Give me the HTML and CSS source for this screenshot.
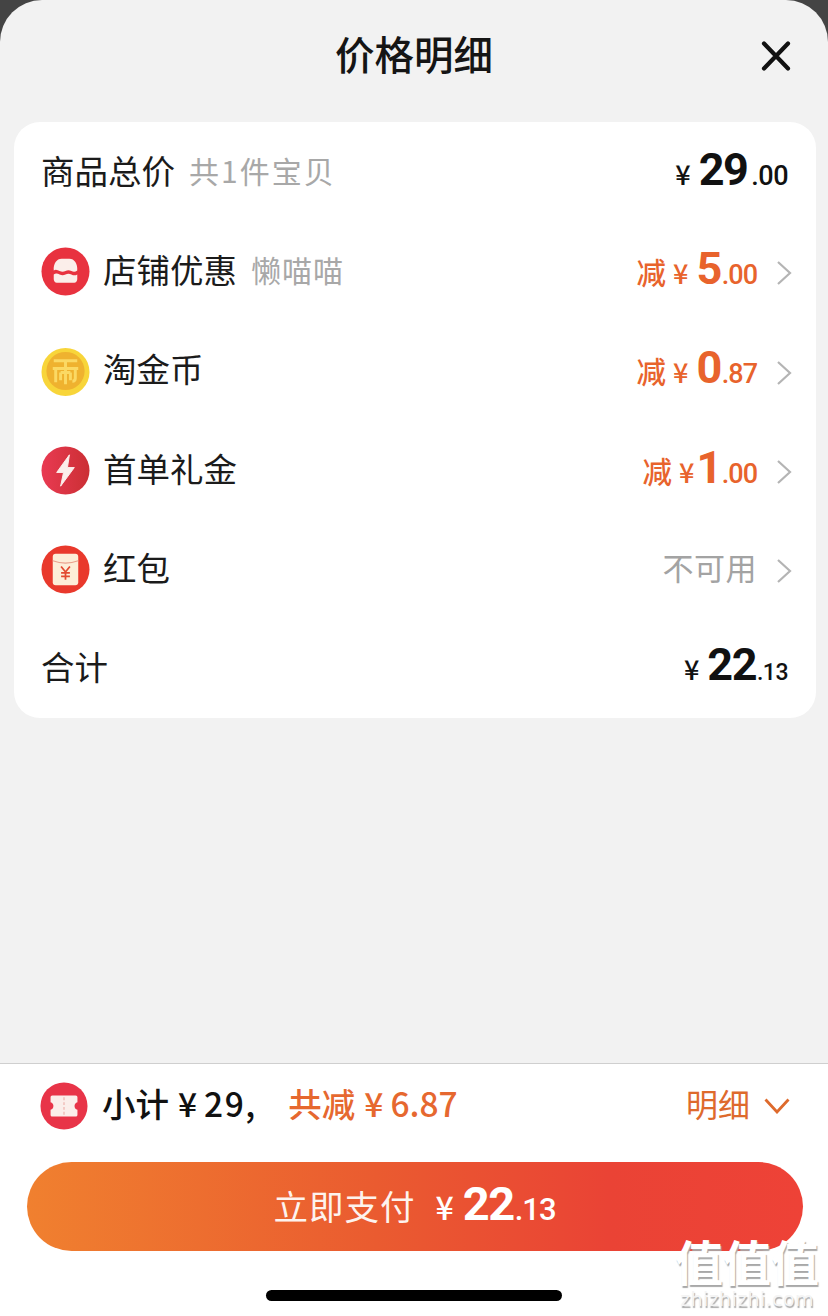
FILE: index.html
```html
<!DOCTYPE html>
<html lang="zh">
<head>
<meta charset="utf-8">
<title>价格明细</title>
<link rel="stylesheet" href="styles.css">
</head>
<body>
<main class="sheet">
  <header class="head">
    <h1 class="title">价格明细</h1>
    <svg class="close" width="30" height="30" viewBox="0 0 30 30"><path d="M3 2.5 27 27.500M27 2.500 3 27.500" fill="none" stroke="#111" stroke-width="4.200" stroke-linecap="round"/></svg>
  </header>
  <section class="card">
    <div class="row">
      <span class="label">商品总价</span><span class="note wide">共1件宝贝</span>
      <span class="price"><span class="yen">¥</span><span class="big">29</span><span class="dec">.00</span></span>
    </div>
    <div class="row">
      <svg class="ico" width="49" height="49" viewBox="0 0 50 50"><circle cx="25" cy="25" r="24.500" fill="#e8323f"/><path d="M13 24c-.5-7 3-12 8-12h8c5 0 8.500 5 8 12-2 1.500-4 1.500-6 .5-2-1-4-1-6 0s-4 1-6 0-4-2-6-.5z" fill="#fbeeea"/><path d="M13 28c2-1.500 4-1 6 0s4 1 6 0 4-1 6 0 4 1.500 6 0v5c0 2-1.500 3.500-3 3.500H16c-1.500 0-3-1.500-3-3.500z" fill="#fbeeea"/></svg>
      <span class="label">店铺优惠</span><span class="note shop">懒喵喵</span>
      <span class="price off"><span class="cut">减</span><span class="yen">¥</span><span class="big">5</span><span class="dec tight">.00</span></span>
      <svg class="chev" width="16" height="26" viewBox="0 0 16 26"><path d="M2 2l12 11L2 24" fill="none" stroke="#b4b4b4" stroke-width="2.200"/></svg>
    </div>
    <div class="row">
      <svg class="ico" width="49" height="49" viewBox="0 0 50 50"><circle cx="25" cy="25.500" r="24.500" fill="#f8d53a"/><circle cx="25" cy="24.500" r="19.500" fill="#efb22f"/><path d="M13 14h24M12 22h26M15 22v14M35 22v10c0 2-1 3-3 3M25 14v24M20 26v8M30 26v8M20 26h10" fill="none" stroke="#fbd964" stroke-width="3"/></svg>
      <span class="label">淘金币</span>
      <span class="price off"><span class="cut">减</span><span class="yen">¥</span><span class="big">0</span><span class="dec tight">.87</span></span>
      <svg class="chev" width="16" height="26" viewBox="0 0 16 26"><path d="M2 2l12 11L2 24" fill="none" stroke="#b4b4b4" stroke-width="2.200"/></svg>
    </div>
    <div class="row">
      <svg class="ico" width="49" height="49" viewBox="0 0 50 50"><defs><linearGradient id="bolt" x1="0" x2="1" y1="0" y2="0"><stop offset="0" stop-color="#e93a52"/><stop offset="1" stop-color="#cb2f34"/></linearGradient></defs><circle cx="25" cy="25" r="24.500" fill="url(#bolt)"/><path d="M29 9 16 27h7l-3 14 14-19h-7z" fill="#fbeeea" stroke="#fbeeea" stroke-linejoin="round"/></svg>
      <span class="label">首单礼金</span>
      <span class="price off"><span class="cut">减</span><span class="yen">¥</span><span class="big one">1</span><span class="dec tight">.00</span></span>
      <svg class="chev" width="16" height="26" viewBox="0 0 16 26"><path d="M2 2l12 11L2 24" fill="none" stroke="#b4b4b4" stroke-width="2.200"/></svg>
    </div>
    <div class="row">
      <svg class="ico" width="49" height="49" viewBox="0 0 50 50"><circle cx="25" cy="25" r="24.500" fill="#e9392c"/><rect x="12" y="9" width="26" height="32" rx="3" fill="#fdeed8"/><path d="M12 16c8 3 18 3 26 0" fill="none" stroke="#e9a08c" stroke-width="1.200"/><path d="M20.500 22l4.500 5.500 4.500-5.500M25 27.500v8M20.500 28.500h9M20.500 32h9" fill="none" stroke="#e24a30" stroke-width="1.800"/></svg>
      <span class="label">红包</span>
      <span class="price na">不可用</span>
      <svg class="chev" width="16" height="26" viewBox="0 0 16 26"><path d="M2 2l12 11L2 24" fill="none" stroke="#b4b4b4" stroke-width="2.200"/></svg>
    </div>
    <div class="row">
      <span class="label">合计</span>
      <span class="price"><span class="yen">¥</span><span class="big">22</span><span class="dec small">.13</span></span>
    </div>
  </section>
  <div class="fill"></div>
  <footer class="foot">
    <div class="sum">
      <svg class="ico" width="48" height="48" viewBox="0 0 50 50"><circle cx="25" cy="25" r="24.500" fill="#e83448"/><path d="M13 14h24c1.500 0 2 1 2 2v5c-4 1-4 7 0 8v5c0 1-.5 2-2 2H13c-1.500 0-2-1-2-2v-5c4-1 4-7 0-8v-5c0-1 .5-2 2-2z" fill="#fbeeea"/><path d="M25 16v18" stroke="#f3c9c4" stroke-width="2" stroke-dasharray="3 2"/></svg>
      <span class="total">小计<span class="sy">¥</span><span class="num">29</span>,</span>
      <span class="save">共减<span class="sy">¥</span>6.87</span>
      <span class="more">明细</span>
      <svg class="down" width="26" height="16" viewBox="0 0 26 16"><path d="M1.500 1.500 13 14 24.500 1.500" fill="none" stroke="#de6a2c" stroke-width="2.800"/></svg>
    </div>
    <button class="pay" type="button"><span class="pay-label">立即支付</span><span class="yen pay-yen">¥</span><span class="big">22</span><span class="dec pay-dec">.13</span></button>
    <div class="home"></div>
  </footer>
</main>
<div class="mark"><div class="mark-big">值值值</div><div class="mark-url">zhizhizhi.com</div></div>
</body>
</html>
```

FILE: styles.css
```css
* { box-sizing: border-box; }
html, body { margin: 0; height: 1316px; overflow: hidden; }
body {
  position: relative;
  background: #444;
  font-family: "Noto Sans CJK SC", "Noto Sans", sans-serif;
  color: #111;
}
.sheet {
  height: 1316px;
  display: flex;
  flex-direction: column;
  background: #f2f2f2;
  border-radius: 42px 42px 0 0;
  overflow: hidden;
}
.head {
  height: 122px;
  flex: none;
  display: flex;
  align-items: center;
  justify-content: center;
  position: relative;
  padding-bottom: 17px;
}
.title { margin: 0; font-size: 39.500px; line-height: 54px; font-weight: 500; color: #151515; }
.close { position: absolute; left: 761px; top: 41px; }
.card {
  flex: none;
  height: 596px;
  margin: 0 12px 0 14px;
  padding: 0 24px 0 27px;
  background: #fff;
  border-radius: 26px;
  display: grid;
  grid-template-rows: repeat(6, 1fr);
}
.row { display: flex; align-items: center; min-width: 0; }
.ico { flex: none; margin: 2px 13px 0 0; }
.label { font-size: 33.500px; line-height: 44px; padding-bottom: 4px; color: #1b1b1b; }
.note { font-size: 30px; line-height: 44px; padding-bottom: 4px; color: #a8a8a8; margin-left: 14px; }
.wide { letter-spacing: 2px; }
.shop { letter-spacing: 1px; }
.price {
  margin: 2px 4px 0 auto;
  display: flex;
  align-items: baseline;
  font-family: Roboto, "Noto Sans CJK SC", sans-serif;
  color: #111;
  line-height: 44px;
}
.yen { font-size: 27px; font-weight: 500; margin-right: 8px; font-family: "Noto Sans CJK SC", sans-serif; }
.big { font-size: 45px; font-weight: 700; letter-spacing: -1.500px; font-family: "Roboto", sans-serif; }
.one { margin-left: -6px; }
.dec { font-size: 27px; font-weight: 500; margin-left: 4px; letter-spacing: -0.5px; font-family: "Roboto", sans-serif; }
.tight { margin-left: 1px; letter-spacing: -1px; }
.small { font-size: 23px; margin-left: 1px; }
.off { color: #e8632c; margin-right: 19px; }
.cut { font-size: 29.500px; font-weight: 500; margin-right: 7px; font-family: "Noto Sans CJK SC", sans-serif; }
.na { color: #a3a3a3; font-size: 31px; margin: 0 19px 0 auto; padding-bottom: 3px; font-family: "Noto Sans CJK SC", sans-serif; letter-spacing: 0.5px; }
.chev { flex: none; margin: 5px 0 0 0; }
.fill { flex: 1; }
.foot {
  flex: none;
  height: 253px;
  background: #fff;
  border-top: 1px solid #cfcfcf;
  display: flex;
  flex-direction: column;
  align-items: center;
}
.sum {
  align-self: stretch;
  height: 83px;
  flex: none;
  padding: 0 38px 0 40px;
  display: flex;
  align-items: center;
}
.sum .ico { margin: 0 14px 0 0; }
.total { font-size: 33.500px; font-weight: 500; color: #111; line-height: 44px; padding-bottom: 5px; }
.num { letter-spacing: 1.500px; }
.save { font-size: 33.500px; font-weight: 500; color: #e6682f; line-height: 44px; padding-bottom: 5px; margin-left: 33px; }
.sy { margin: 0 7px 0 9px; }
.more { margin-left: auto; font-size: 32px; line-height: 44px; padding-bottom: 5px; color: #de6a2c; }
.down { flex: none; margin-left: 14px; }
.pay {
  flex: none;
  width: 776px;
  height: 89px;
  margin: 15px 0 0 1px;
  border: 0;
  padding: 0;
  border-radius: 45px;
  background: linear-gradient(90deg, #f0802f 0%, #ea5b30 45%, #ea4335 75%, #ee4237 100%);
  color: #fff;
  display: flex;
  align-items: baseline;
  justify-content: center;
  line-height: 84px;
  font-family: "Noto Sans CJK SC", sans-serif;
}
.pay-label { font-size: 34.500px; font-weight: 400; letter-spacing: 1px; margin-right: 20px; color: #fdf3ee; }
.pay-yen { font-size: 32px; margin-right: 9px; }
.pay .big { font-size: 47px; }
.pay-dec { font-size: 31px; margin-left: 1px; letter-spacing: -1px; }
.home {
  flex: none;
  width: 296px;
  height: 11px;
  margin-top: 39px;
  background: #000;
  border-radius: 6px;
}
.mark {
  position: absolute;
  left: 674px;
  top: 1235px;
  width: 146px;
  color: #fff;
  text-align: center;
  text-shadow: 1px 2px 1px #a8a8a8;
  pointer-events: none;
}
.mark-big { font-size: 48px; line-height: 50px; font-weight: 700; white-space: nowrap; }
.mark-url { margin-top: 3px; font-family: "DejaVu Sans", sans-serif; font-size: 19px; line-height: 22px; letter-spacing: 0.4px; white-space: nowrap; color: #f4f4f4; }
```
